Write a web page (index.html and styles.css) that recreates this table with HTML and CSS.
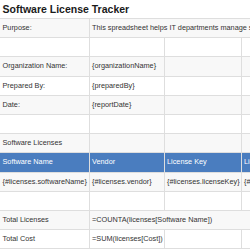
FILE: index.html
```html
<!DOCTYPE html>
<html lang="en">
<head>
    <meta charset="UTF-8">
    <title>Software License Tracker</title>
    <link rel="stylesheet" href="styles.css">
</head>
<body>
    <div class="sheet">
        <table class="grid">
            <colgroup>
                <col class="col-a">
                <col class="col-b">
                <col class="col-c">
                <col class="col-d">
            </colgroup>
            <tr class="title-row"><td colspan="4">Software License Tracker</td></tr>
            <tr><td>Purpose:</td><td colspan="3">This spreadsheet helps IT departments manage software licenses, renewals and costs.</td></tr>
            <tr><td></td><td></td><td></td><td></td></tr>
            <tr><td>Organization Name:</td><td>{organizationName}</td><td></td><td></td></tr>
            <tr><td>Prepared By:</td><td>{preparedBy}</td><td></td><td></td></tr>
            <tr><td>Date:</td><td>{reportDate}</td><td></td><td></td></tr>
            <tr><td></td><td></td><td></td><td></td></tr>
            <tr><td>Software Licenses</td><td></td><td></td><td></td></tr>
            <tr class="head-row">
                <td>Software Name</td><td>Vendor</td><td>License Key</td><td>License Type</td>
            </tr>
            <tr class="data-row">
                <td>{#licenses.softwareName}</td><td>{#licenses.vendor}</td><td>{#licenses.licenseKey}</td><td>{#licenses.licenseType}</td>
            </tr>
            <tr><td></td><td></td><td></td><td></td></tr>
            <tr><td>Total Licenses</td><td colspan="3">=COUNTA(licenses[Software Name])</td></tr>
            <tr><td>Total Cost</td><td>=SUM(licenses[Cost])</td><td></td><td></td></tr>
        </table>
    </div>
</body>
</html>
```

FILE: styles.css
```css
html, body {
    margin: 0;
    background: #fff;
}
.sheet {
    width: 250px;
    height: 250px;
    overflow: hidden;
    font-family: "Liberation Sans", Arial, sans-serif;
}
.grid {
    border-collapse: collapse;
    table-layout: fixed;
    width: 330px;
}
.col-a { width: 89px; }
.col-b { width: 75px; }
.col-c { width: 77px; }
.col-d { width: 89px; }
.grid td {
    border-right: 1px solid #dedede;
    border-bottom: 1px solid #dedede;
    padding: 0 2.5px;
    height: 18.2px;
    line-height: 18.2px;
    font-size: 7.3px;
    color: #333;
    white-space: nowrap;
    overflow: visible;
}
.grid tr:nth-child(even) td {
    background: #f8f8f8;
}
.title-row td {
    height: 18px;
    line-height: 18px;
    font-size: 10.5px;
    font-weight: bold;
    color: #1a1a1a;
    border-right: none;
}
.grid .head-row td {
    background: #4a7dbf;
    color: #fff;
}
.grid .data-row td {
    background: #dce6f1;
}
```
